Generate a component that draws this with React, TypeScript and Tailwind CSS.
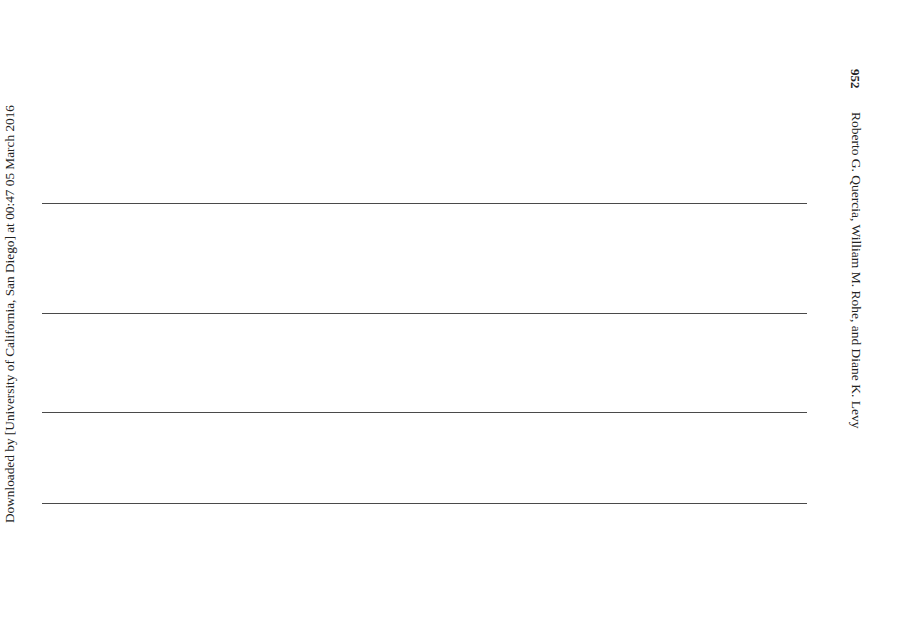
import React from "react";

const lines = [203, 313, 412, 503];

const App = () => {
	return (
		<div className="flex h-[624px] w-[912px] overflow-hidden bg-white text-[#222] font-['Liberation_Serif',serif]">
			<div className="flex w-[19px] shrink-0 items-start justify-center pt-[105px]">
				<p className="rotate-180 whitespace-nowrap text-[13.3px] leading-none [writing-mode:vertical-rl]">
					Downloaded by [University of California, San Diego] at 00:47 05 March 2016
				</p>
			</div>
			<div className="ml-[23px] w-[765px] shrink-0">
				{lines.map((top, i) => (
					<div
						key={top}
						className="h-px bg-[#4a4a4a]"
						style={{ marginTop: i === 0 ? top : top - lines[i - 1] - 1 }}
					/>
				))}
			</div>
			<div className="ml-[42px] flex flex-col items-center pt-[69px]">
				<p className="whitespace-nowrap text-[13px] font-bold leading-none [writing-mode:vertical-rl]">952</p>
				<p className="mt-[23px] whitespace-nowrap text-[13.5px] leading-none [writing-mode:vertical-rl]">
					Roberto G. Quercia, William M. Rohe, and Diane K. Levy
				</p>
			</div>
		</div>
	);
};

export default App;
